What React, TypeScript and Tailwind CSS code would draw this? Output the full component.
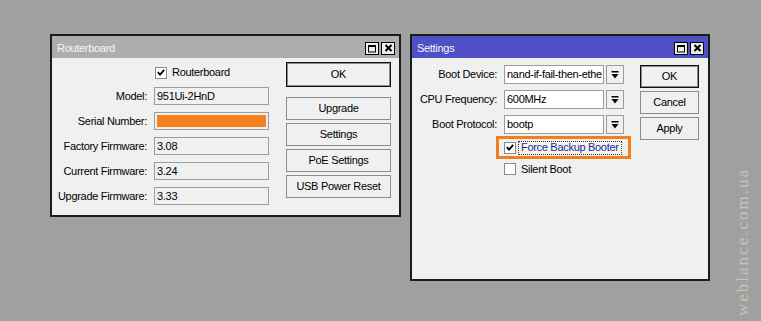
import React from 'react';

const txt = "font-['Liberation_Sans',Arial,sans-serif] text-[11px] tracking-[-0.3px] text-black";

const TitleBar: React.FC<{ title: string; active?: boolean }> = ({ title, active }) => (
    <div
        className={`flex h-[22px] items-center justify-between pl-[5px] pr-[4px] pt-[2px] ${
            active ? 'bg-[#4f4fc6]' : 'bg-[#adadad]'
        }`}
    >
        <span className="font-['Liberation_Sans',Arial,sans-serif] text-[11px] tracking-[-0.3px] text-[#f6f6f6]">{title}</span>
        <div className="flex gap-[2px]">
            <div className="flex h-[13px] w-[14px] items-center justify-center border border-black bg-[#ececec]">
                <svg width="10" height="9" viewBox="0 0 10 9">
                    <rect x="1.5" y="1.5" width="7" height="6.5" fill="none" stroke="#000" strokeWidth="1" />
                    <rect x="1" y="1" width="8" height="2" fill="#000" />
                </svg>
            </div>
            <div className="flex h-[13px] w-[14px] items-center justify-center border border-black bg-[#ececec]">
                <svg width="9" height="8" viewBox="0 0 9 8">
                    <path d="M1.5 1 L7.5 7 M7.5 1 L1.5 7" stroke="#000" strokeWidth="2" />
                </svg>
            </div>
        </div>
    </div>
);

const Label: React.FC<{ children: React.ReactNode }> = ({ children }) => (
    <div className={`${txt} flex items-center justify-end pr-[5px] whitespace-nowrap`}>{children}</div>
);

const Field: React.FC<{ value?: string; white?: boolean }> = ({ value, white }) => (
    <div
        className={`${txt} flex items-center overflow-hidden whitespace-nowrap border border-[#9c9c9c] pl-[2px] ${
            white ? 'bg-white' : 'bg-[#f0f0f0]'
        }`}
    >
        {value}
    </div>
);

const Btn: React.FC<{ label: string; primary?: boolean; tall?: boolean }> = ({ label, primary, tall }) => (
    <div
        className={`${txt} flex items-center justify-center bg-[#f0f0f0] ${tall ? 'h-[25px]' : 'h-[23px]'} ${
            primary ? 'border border-[#111] shadow-[inset_0_0_0_1px_#8a8a8a]' : 'border border-[#8c8c8c]'
        }`}
    >
        {label}
    </div>
);

const Check: React.FC<{ checked?: boolean }> = ({ checked }) => (
    <div className="flex h-[12px] w-[12px] shrink-0 items-center justify-center border border-[#8a8a8a] bg-white">
        {checked && (
            <svg width="8" height="7" viewBox="0 0 8 7">
                <path d="M0.8 3.2 L3 5.6 L7.2 0.8" fill="none" stroke="#000" strokeWidth="1.8" />
            </svg>
        )}
    </div>
);

const DropBtn: React.FC = () => (
    <div className="flex items-center justify-center border border-[#9c9c9c] bg-[#f0f0f0]">
        <svg width="8" height="8" viewBox="0 0 8 8">
            <rect x="0.5" y="0" width="7" height="1.5" fill="#000" />
            <path d="M0.5 3 L7.5 3 L4 7.5 Z" fill="#000" />
        </svg>
    </div>
);

const rbRows = [
    ['Model:', '951Ui-2HnD'],
    ['Serial Number:', ''],
    ['Factory Firmware:', '3.08'],
    ['Current Firmware:', '3.24'],
    ['Upgrade Firmware:', '3.33'],
];

const App: React.FC = () => (
    <div className="relative flex h-[321px] w-[761px] items-start gap-[9px] overflow-hidden bg-[#a0a0a0] pl-[50px] pt-[34px]">
        {/* Routerboard window */}
        <div className="flex h-[183px] w-[351px] flex-col border-2 border-[#1c1c1c] bg-[#f0f0f0]">
            <TitleBar title="Routerboard" />
            <div className="flex flex-1">
                <div className="grid grid-cols-[100px_115px] grid-rows-[15px_18px_18px_18px_18px_18px] content-start gap-x-[2px] gap-y-[7px] pt-[7px]">
                    <div />
                    <div className={`${txt} flex items-center gap-[5px] pl-[1px]`}>
                        <Check checked />
                        <span>Routerboard</span>
                    </div>
                    {rbRows.map(([label, value]) => (
                        <React.Fragment key={label}>
                            <Label>{label}</Label>
                            {label === 'Serial Number:' ? (
                                <div className="border border-[#9c9c9c] bg-[#f0f0f0] p-[2px]">
                                    <div className="h-full bg-[#f5821f]" />
                                </div>
                            ) : (
                                <Field value={value} />
                            )}
                        </React.Fragment>
                    ))}
                </div>
                <div className="ml-[17px] flex w-[105px] flex-col pt-[4px]">
                    <Btn label="OK" primary tall />
                    <div className="mt-[10px] flex flex-col gap-[3px]">
                        <Btn label="Upgrade" />
                        <Btn label="Settings" />
                        <Btn label="PoE Settings" />
                        <Btn label="USB Power Reset" />
                    </div>
                </div>
            </div>
        </div>

        {/* Settings window */}
        <div className="flex h-[247px] w-[300px] flex-col border-2 border-[#1c1c1c] bg-[#f0f0f0]">
            <TitleBar title="Settings" active />
            <div className="flex flex-1">
                <div className="flex w-[212px] shrink-0 flex-col pt-[7px]">
                    <div className="grid grid-cols-[90px_100px_18px] grid-rows-[19px_19px_19px] gap-x-[2px] gap-y-[6px]">
                        <Label>Boot Device:</Label>
                        <Field value="nand-if-fail-then-ethe" white />
                        <DropBtn />
                        <Label>CPU Frequency:</Label>
                        <Field value="600MHz" white />
                        <DropBtn />
                        <Label>Boot Protocol:</Label>
                        <Field value="bootp" white />
                        <DropBtn />
                    </div>
                    <div className="ml-[84px] mt-[2px] flex h-[23px] w-[135px] shrink-0 items-center gap-[2px] border-[3px] border-[#f07f22] pl-[5px]">
                        <Check checked />
                        <span
                            className={`${txt} flex h-[14px] items-center border border-dotted border-[#333] bg-[#f6f6e4] px-[2px] !text-[#1c1cb4]`}
                        >
                            Force Backup Booter
                        </span>
                    </div>
                    <div className={`${txt} ml-[92px] mt-[4px] flex h-[12px] items-center gap-[5px]`}>
                        <Check />
                        <span>Silent Boot</span>
                    </div>
                </div>
                <div className="ml-[16px] flex w-[59px] flex-col gap-[3px] pt-[7px]">
                    <Btn label="OK" primary />
                    <Btn label="Cancel" />
                    <Btn label="Apply" />
                </div>
            </div>
        </div>

        {/* watermark */}
        <div className="absolute bottom-[5px] right-[10px] rotate-180 font-['Liberation_Serif','Times_New_Roman',serif] text-[17px] leading-[17px] tracking-[2px] text-[#c3c6b6] [writing-mode:vertical-rl]">
            weblance.com.ua
        </div>
    </div>
);

export default App;
